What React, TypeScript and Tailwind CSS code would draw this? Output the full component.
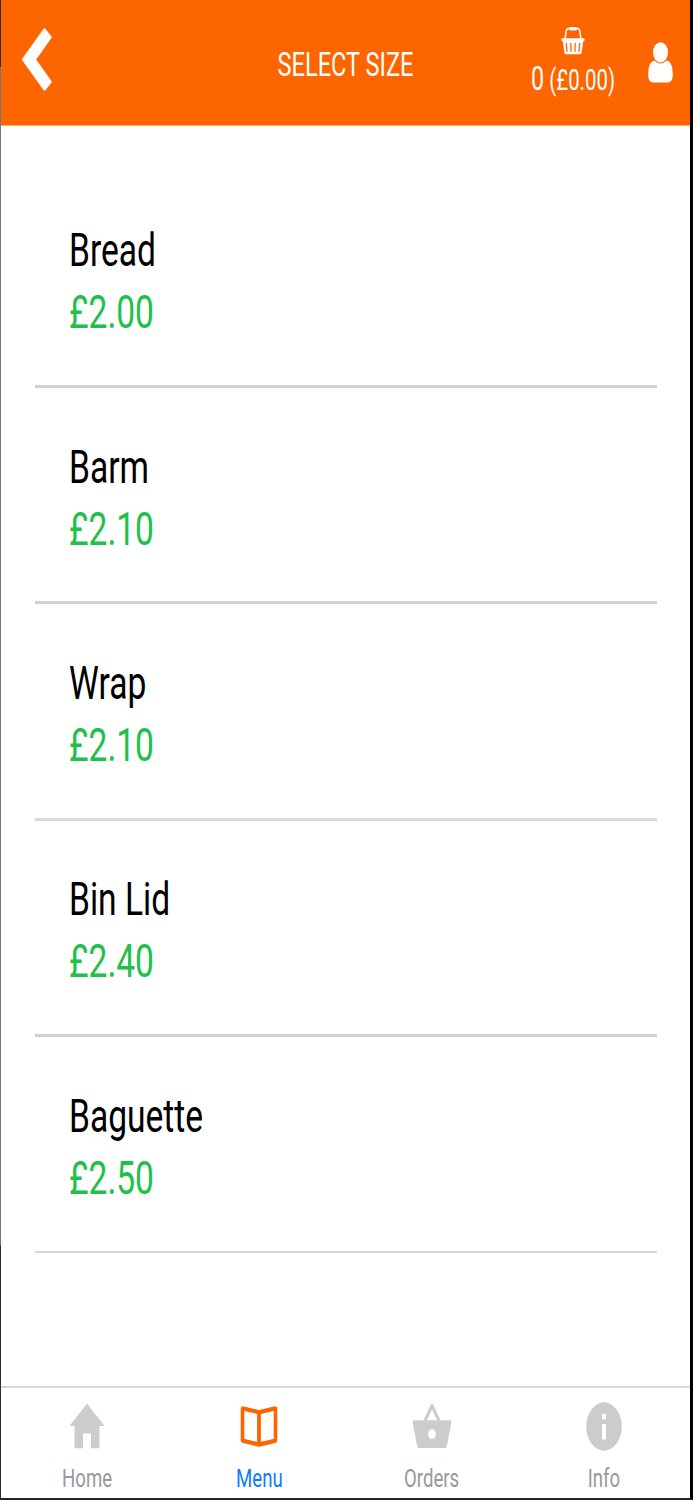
import type { ReactNode } from "react";

const sizes = [
  { name: "Bread", price: "£2.00", line: "h-[3px] bg-[#d0d0d0]" },
  { name: "Barm", price: "£2.10", line: "h-[3px] bg-[#d0d0d0]" },
  { name: "Wrap", price: "£2.10", line: "h-[3px] bg-[#dadada]" },
  { name: "Bin Lid", price: "£2.40", line: "h-[3px] bg-[#d0d0d0]" },
  { name: "Baguette", price: "£2.50", line: "h-[2px] bg-[#d6d6d6]" },
];

function BackIcon() {
  return (
    <svg width="32" height="64" viewBox="0 0 32 64" fill="#fff">
      <path d="M.7 31.5 22.6.7Q23.5-.3 24.4.7L30.4 8.300Q31 9.100 30.400 10L15.200 31.500 30.400 53Q31 53.900 30.400 54.700L24.400 62.200Q23.500 63.300 22.600 62.200Z" />
    </svg>
  );
}

function HeaderBasketIcon() {
  return (
    <svg width="24" height="30" viewBox="0 0 24 30" fill="none" stroke="#fff">
      <path d="M4 13 5.3 4.8Q5.7 2.4 7.5 2.4h9Q18.3 2.4 18.7 4.8L20 13" strokeWidth="1.5" />
      <path d="M9.5 2.8h5" strokeWidth="3.4" strokeLinecap="round" />
      <path
        d="M1.3 12.2h21.4q.8 0 .8 1.1v1q0 1.1-.8 1.1h-.6L20.7 26.500q-.3 1.800-1.600 1.800H4.900q-1.300 0-1.600-1.800L1.900 15.400h-.6q-.8 0-.8-1.100v-1q0-1.100.8-1.100Z"
        fill="#fff"
        stroke="none"
      />
      <path
        d="m5.3 17.500.7 7.800M9.800 17.500l.2 7.800M14.200 17.500l-.2 7.800M18.700 17.500 18 25.300"
        stroke="#fd6500"
        strokeWidth="1.3"
        strokeLinecap="round"
      />
    </svg>
  );
}

function UserIcon() {
  return (
    <svg width="25" height="41" viewBox="0 0 25 41" fill="#fff">
      <path d="M6.5 18.6Q9 21.5 12.5 21.5t6-2.9C23 19.2 24.8 25 24.8 33.3 24.8 38 22.6 40.6 19.3 40.6H5.7C2.4 40.6.2 38 .2 33.3.2 25 2 19.2 6.5 18.6Z" />
      <ellipse cx="12.5" cy="10.4" rx="7.5" ry="10.1" />
    </svg>
  );
}

function HomeIcon() {
  return (
    <svg width="36" height="46" viewBox="0 0 36 46" fill="#ccc">
      <path d="M18 .5 35.5 23H30.5V45.3H22V30.5H14V45.3H5.5V23H.5Z" />
    </svg>
  );
}

function MenuIcon() {
  return (
    <svg width="38" height="44" viewBox="0 0 38 44" fill="none" stroke="#fd6500" strokeLinejoin="round">
      <path d="M2.5 4.4 19 8.2 35.5 4.4V36.5L19 40.3 2.5 36.5Z" strokeWidth="3.6" />
      <path d="M2.5 4.2 19 8.2 35.5 4.2M2.5 36.7 19 40.7 35.5 36.7" strokeWidth="4" />
      <path d="M19 8V40" strokeWidth="3.8" />
    </svg>
  );
}

function OrdersIcon() {
  return (
    <svg width="40" height="46" viewBox="0 0 40 46" fill="#ccc">
      <path
        fillRule="evenodd"
        d="M11.5 17.2 19 1.1q1-1.5 2 0l7.5 16.1h9.6q1.5.2 1.2 2.4L35 42.6q-.5 2.5-2.3 2.5H7.3Q5.5 45.1 5 42.6L.7 19.6Q.4 17.4 1.9 17.2ZM14.800 17.200h10.400L20 6.500ZM20 26c-2.200 0-3.900 2.200-3.900 4.900s1.700 4.900 3.900 4.900 3.900-2.200 3.900-4.900S22.200 26 20 26Z"
      />
    </svg>
  );
}

function InfoIcon() {
  return (
    <svg width="36" height="49" viewBox="0 0 36 49">
      <ellipse cx="18" cy="24.5" rx="17.8" ry="24.2" fill="#ccc" />
      <path d="M16 12h4v5.2h-4zM16 22h4v15.5h-4z" fill="#fff" />
    </svg>
  );
}

function Tab({ label, active, children }: { label: string; active?: boolean; children: ReactNode }) {
  return (
    <button className="flex flex-1 flex-col items-center pt-3">
      <span className="flex h-[52px] shrink-0 items-center">{children}</span>
      <span
        className={`mt-[9px] scale-y-[1.38] text-[18.6px] leading-[37px] ${active ? "text-[#0a7cff]" : "text-[#99999c]"}`}
      >
        {label}
      </span>
    </button>
  );
}

export default function App() {
  return (
    <div className="flex h-[1500px] w-[693px] border-r-[3px] border-b-2 border-r-black border-b-[#22272b] bg-white font-[Roboto,sans-serif]">
      {/* Window edge */}
      <div className="flex w-px shrink-0 flex-col">
        <div className="h-[67px] bg-[#2a2d33]" />
        <div className="flex-1 bg-[#77777b]" />
        <div className="h-[253px] bg-[#2a3038]" />
      </div>

      <div className="flex min-w-0 flex-1 flex-col">
        <header className="grid h-[126px] shrink-0 grid-cols-[1fr_auto_1fr] items-start border-b border-[#fda56a] bg-[#fd6500] text-white">
          <button aria-label="Back" className="pt-[28px] pl-5">
            <BackIcon />
          </button>
          <h1 className="scale-y-[1.37] text-[23.6px] leading-[130px]">SELECT SIZE</h1>
          <div className="flex justify-end gap-[33px] pr-[17px]">
            <div className="flex flex-col items-center pt-[26px]">
              <HeaderBasketIcon />
              <p className="scale-y-[1.41] text-[20.4px] leading-[47px] whitespace-nowrap">
                <span className="text-[23.4px]">0</span> (£0.00)
              </p>
            </div>
            <div className="pt-[42px]">
              <UserIcon />
            </div>
          </div>
        </header>

        <main className="flex-1 pt-[45.7px] pr-[33px] pl-[34px]">
          {sizes.map((size) => (
            <div key={size.name} className="flex h-[216.3px] flex-col pt-[48.7px]">
              <p className="scale-y-[1.38] pl-[34px] text-[33.6px] leading-[62px] text-black">{size.name}</p>
              <p className="scale-y-[1.38] pl-[34px] text-[33.6px] leading-[61px] text-[#21c04b]">{size.price}</p>
              <div className={`mt-auto ${size.line}`} />
            </div>
          ))}
        </main>

        <nav className="flex h-[112px] shrink-0 items-start border-t-2 border-[#d8d8d8]">
          <Tab label="Home">
            <HomeIcon />
          </Tab>
          <Tab label="Menu" active>
            <MenuIcon />
          </Tab>
          <Tab label="Orders">
            <OrdersIcon />
          </Tab>
          <Tab label="Info">
            <InfoIcon />
          </Tab>
        </nav>
      </div>
    </div>
  );
}
